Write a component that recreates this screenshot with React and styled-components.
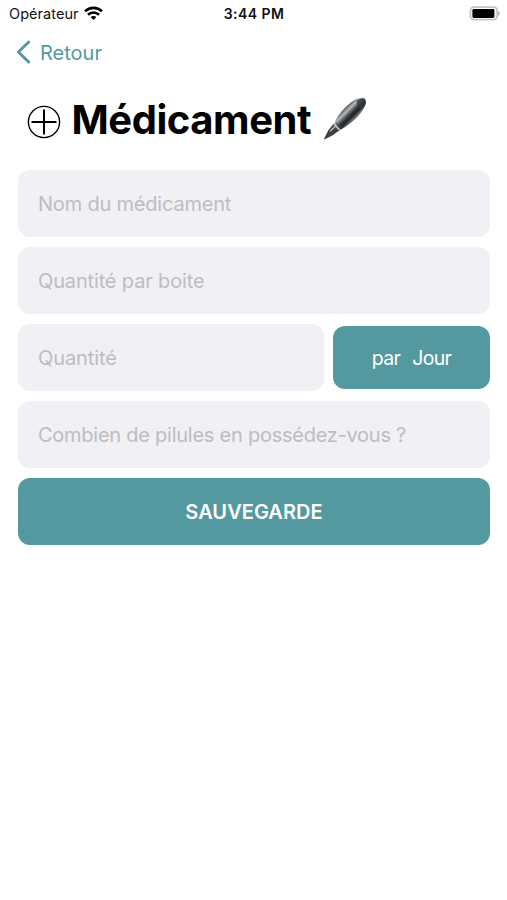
import React from "react";
import styled, { createGlobalStyle } from "styled-components";

const TEAL = "#5499a0";

const GlobalStyle = createGlobalStyle`
  * { box-sizing: border-box; }
  body {
    margin: 0;
    background: #fff;
    font-family: Inter, "Liberation Sans", sans-serif;
  }
`;

const Screen = styled.div`
  display: flex;
  flex-direction: column;
  height: 900px;
  overflow: hidden;
  background: #fff;
`;

const StatusBar = styled.header`
  display: grid;
  grid-template-columns: 1fr auto 1fr;
  align-items: center;
  height: 27px;
  padding: 0 7px 0 9px;
  color: #111;
`;

const Carrier = styled.div`
  display: flex;
  align-items: center;
  gap: 5px;
  font-size: 14.5px;
  line-height: 20px;
  letter-spacing: 0.05px;
`;

const Clock = styled.time`
  margin-right: 1px;
  font-size: 14px;
  font-weight: 600;
  line-height: 20px;
  letter-spacing: 0.45px;
`;

const BatteryIcon = styled.svg`
  display: block;
  justify-self: end;
`;

const BackButton = styled.button`
  display: flex;
  align-items: center;
  align-self: flex-start;
  gap: 9px;
  height: 50px;
  padding: 1px 0 0 16px;
  border: 0;
  background: none;
  color: ${TEAL};
  font: 400 20px/26px Inter, "Liberation Sans", sans-serif;
`;

const Heading = styled.div`
  display: flex;
  align-items: center;
  height: 93px;
  padding-left: 27px;
`;

const PlusIcon = styled.svg`
  flex: none;
  margin: 0 10.5px 3px 0;
`;

const Title = styled.h1`
  margin: 0 12px 8px 0;
  font-size: 40px;
  font-weight: 700;
  line-height: 48px;
  letter-spacing: -0.45px;
  color: #000;
  white-space: nowrap;
`;

const PenIcon = styled.svg`
  flex: none;
  margin-bottom: 10px;
`;

const Form = styled.main`
  display: flex;
  flex-direction: column;
  gap: 10px;
  padding: 0 17px 0 18px;
`;

const FieldRow = styled.div`
  display: grid;
  grid-template-columns: 305.5px 1fr;
  align-items: center;
  gap: 9.5px;
`;

const Field = styled.div`
  display: flex;
  align-items: center;
  height: 67px;
  padding: 1px 20px 0;
  border-radius: 12px;
  background: #f0f0f5;
  color: #bdbdc1;
  font-size: 20px;
  line-height: 26px;
  letter-spacing: ${(p) => p.$tracking || "-0.2px"};
  white-space: nowrap;
`;

const Button = styled.button`
  display: flex;
  align-items: center;
  justify-content: center;
  gap: 12px;
  height: ${(p) => (p.$compact ? "63px" : "67px")};
  padding: ${(p) => (p.$compact ? "1px 0 0" : "0")};
  border: 0;
  border-radius: 12px;
  background: ${TEAL};
  color: #fff;
  font: ${(p) => (p.$compact ? "400 19.5px" : "600 20px")}/26px Inter, "Liberation Sans", sans-serif;
  letter-spacing: ${(p) => (p.$compact ? "-0.65px" : "0.05px")};
`;

export default function App() {
  return (
    <Screen>
      <GlobalStyle />
      <StatusBar>
        <Carrier>
          <span>Opérateur</span>
          <svg width="19" height="15" viewBox="0 0 19 15" fill="none" stroke="#000" strokeWidth="2.6">
            <path d="M1 5.3C5.8.7 13.2.7 18 5.3" />
            <path d="M4 8.7c3.1-3 7.9-3 11 0" />
            <path d="M9.5 14 6.6 11.1c1.6-1.5 4.2-1.5 5.8 0z" fill="#000" stroke="none" />
          </svg>
        </Carrier>
        <Clock>3:44 PM</Clock>
        <BatteryIcon width="31" height="15" viewBox="0 0 31 15">
          <rect x="1.4" y="1.2" width="26.8" height="12.4" rx="3.6" fill="#fff" stroke="#c4c4c4" strokeWidth="1.8" />
          <rect x="3.4" y="2.9" width="22" height="9" rx="1.4" fill="#000" />
          <path d="M29.2 5.2c2 .7 2 3.9 0 4.6z" fill="#aaa" />
        </BatteryIcon>
      </StatusBar>

      <BackButton>
        <svg width="15" height="25" viewBox="0 0 15 25" fill="none" stroke={TEAL} strokeWidth="3" strokeLinecap="round" strokeLinejoin="round">
          <path d="M12.7 2 2.4 12 12.7 22" />
        </svg>
        Retour
      </BackButton>

      <Heading>
        <PlusIcon width="34" height="34" viewBox="0 0 34 34" fill="none" stroke="#000">
          <circle cx="17" cy="17" r="15.6" strokeWidth="1.4" />
          <path d="M17 4.5v25M4.5 17h25" strokeWidth="2" />
        </PlusIcon>
        <Title>Médicament</Title>
        <PenIcon width="44" height="44" viewBox="0 0 44 44">
          <defs>
            <linearGradient id="barrel" gradientUnits="userSpaceOnUse" x1="19.5" y1="14" x2="28.5" y2="23">
              <stop offset="0" stopColor="#5d6167" />
              <stop offset="0.25" stopColor="#b3b8bd" />
              <stop offset="0.45" stopColor="#6a6e74" />
              <stop offset="0.65" stopColor="#2d3035" />
              <stop offset="0.88" stopColor="#222529" />
              <stop offset="1" stopColor="#63676c" />
            </linearGradient>
          </defs>
          <path d="M1.4 42.4c-.5-.5-.1-1.2.3-1.9L5.4 33 11 26.500l6 6.500-7.300 5.300z" fill="#3d4045" />
          <path d="M7 34.200 12.400 29.300" stroke="#b5b9bd" strokeWidth="1.500" />
          <path d="M11 27C13 21.500 17.300 15.300 22.500 10.200 28 4.800 34 .8 38.600.8c3 0 4.600 1.800 4.300 4.600-.4 4.200-4.200 9.800-9.200 15C28.500 25.600 22.500 30.300 17 33z" fill="url(#barrel)" />
          <path d="m11.200 27.300 5.500 5.500" stroke="#c2c6c9" strokeWidth="1.800" />
          <path d="m12.900 25.500 5.700 5.500" stroke="#4c5055" strokeWidth="1" />
          <path d="M33.600 3.500c3.200-2 6.700-2.500 7.900-.6 1 2-.6 5.600-3.200 9.100-1.900-.2-4.400-3.500-4.700-8.500z" fill="#34373c" opacity=".75" />
        </PenIcon>
      </Heading>

      <Form>
        <Field>Nom du médicament</Field>
        <Field $tracking="-0.15px">Quantité par boite</Field>
        <FieldRow>
          <Field $tracking="-0.1px">Quantité</Field>
          <Button $compact>
            <span>par</span>
            <span>Jour</span>
          </Button>
        </FieldRow>
        <Field $tracking="-0.25px">Combien de pilules en possédez-vous ?</Field>
        <Button>SAUVEGARDE</Button>
      </Form>
    </Screen>
  );
}
